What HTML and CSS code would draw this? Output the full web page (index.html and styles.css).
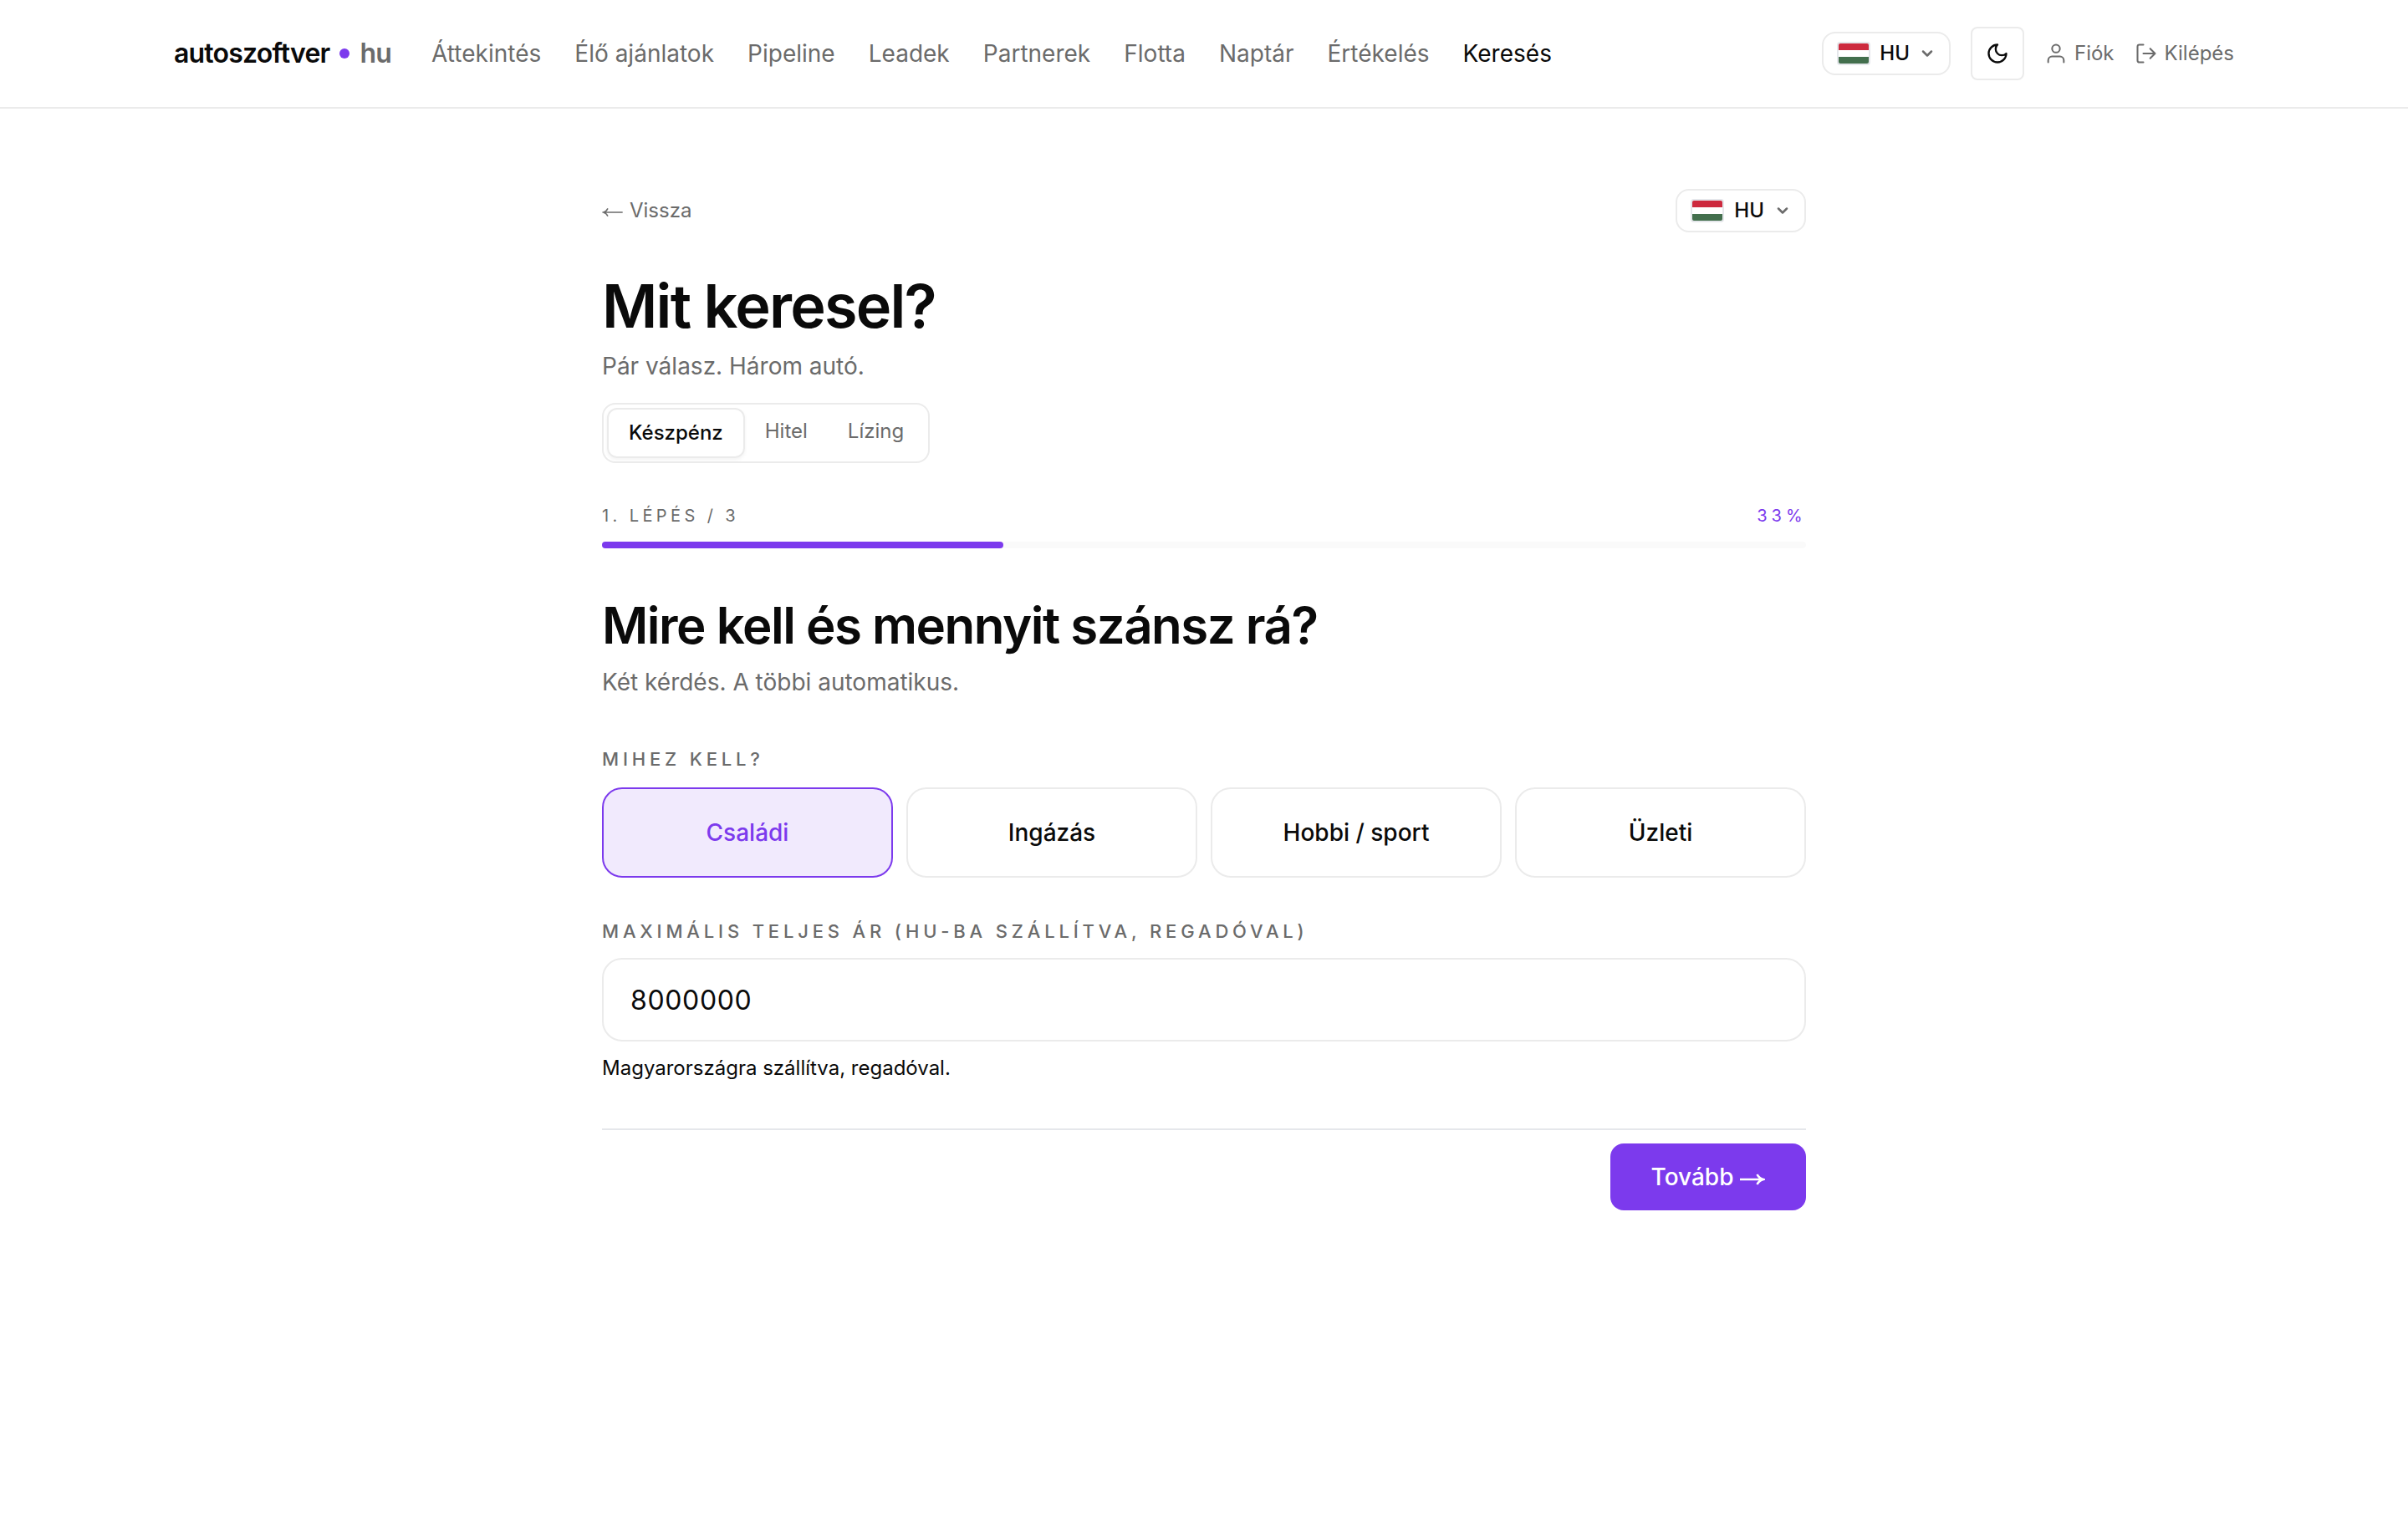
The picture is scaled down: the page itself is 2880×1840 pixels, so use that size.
FILE: index.html
```html
<!DOCTYPE html>
<html lang="hu">
<head>
<meta charset="utf-8">
<title>autoszoftver • hu</title>
<link rel="stylesheet" href="styles.css">
</head>
<body>
<header class="topbar">
  <div class="topbar-inner">
    <a class="logo"><span>autoszoftver</span><span class="logo-dot"></span><span class="logo-tld">hu</span></a>
    <nav class="nav">
      <a>Áttekintés</a>
      <a>Élő ajánlatok</a>
      <a>Pipeline</a>
      <a>Leadek</a>
      <a>Partnerek</a>
      <a>Flotta</a>
      <a>Naptár</a>
      <a>Értékelés</a>
      <a class="current">Keresés</a>
    </nav>
    <div class="tools">
      <button class="lang lang-compact"><span class="flag"></span><span>HU</span><svg class="chevron" viewBox="0 0 24 24"><path d="m6 9 6 6 6-6"/></svg></button>
      <button class="theme"><svg class="icon" viewBox="0 0 24 24"><path d="M12 3a6 6 0 0 0 9 9 9 9 0 1 1-9-9Z"/></svg></button>
      <a class="tool"><svg class="icon" viewBox="0 0 24 24"><path d="M20 21v-2a4 4 0 0 0-4-4H8a4 4 0 0 0-4 4v2"/><circle cx="12" cy="7" r="4"/></svg><span>Fiók</span></a>
      <a class="tool"><svg class="icon" viewBox="0 0 24 24"><path d="M9 21H5a2 2 0 0 1-2-2V5a2 2 0 0 1 2-2h4M16 17l5-5-5-5M21 12H9"/></svg><span>Kilépés</span></a>
    </div>
  </div>
</header>
<main class="page">
  <div class="page-top">
    <a class="back"><svg class="arrow-left" viewBox="0 0 26 14"><path d="M2 7h22.7M7 2.4C6 4.6 4.400 6.200 1.600 7C4.400 7.800 6 9.400 7 11.600"/></svg><span>Vissza</span></a>
    <button class="lang"><span class="flag"></span><span>HU</span><svg class="chevron" viewBox="0 0 24 24"><path d="m6 9 6 6 6-6"/></svg></button>
  </div>
  <h1 class="title">Mit keresel?</h1>
  <p class="subtitle">Pár válasz. Három autó.</p>
  <div class="segmented">
    <a class="segment active">Készpénz</a>
    <a class="segment">Hitel</a>
    <a class="segment">Lízing</a>
  </div>
  <div class="progress-head"><span>1. LÉPÉS / 3</span><span class="percent">33%</span></div>
  <div class="progress"><div class="progress-bar" style="width: 33.333%"></div></div>
  <h2 class="question">Mire kell és mennyit szánsz rá?</h2>
  <p class="hint">Két kérdés. A többi automatikus.</p>
  <div class="label">MIHEZ KELL?</div>
  <div class="options">
    <button class="option selected">Családi</button>
    <button class="option">Ingázás</button>
    <button class="option">Hobbi / sport</button>
    <button class="option">Üzleti</button>
  </div>
  <div class="label label-amount">MAXIMÁLIS TELJES ÁR (HU-BA SZÁLLÍTVA, REGADÓVAL)</div>
  <div class="amount">8000000</div>
  <p class="note">Magyarországra szállítva, regadóval.</p>
  <div class="actions">
    <button class="next"><span>Tovább</span><svg class="arrow-right" viewBox="0 0 30 18"><path d="M0 9h28M20.500 3C22 6 24.500 8 28 9C24.500 10 22 12 20.500 15"/></svg></button>
  </div>
</main>
</body>
</html>
```
FILE: styles.css
```css
* { box-sizing: border-box; }
body { margin: 0; background: #fff; color: #0a0a0a; font-family: Inter, "Liberation Sans", sans-serif; font-size: 32px; line-height: 1.5; }
h1, h2, p { margin: 0; }
button { font: inherit; color: inherit; background: none; margin: 0; padding: 0; }

.topbar { height: 130px; border-bottom: 2px solid #ebebeb; }
.topbar-inner { width: 2464px; height: 128px; margin: 0 auto; display: flex; align-items: center; }
.logo { display: flex; align-items: center; gap: 12px; font-size: 32px; font-weight: 600; letter-spacing: -0.025em; }
.logo-dot { width: 12px; height: 12px; border-radius: 50%; background: #7c3aed; }
.logo-tld { color: #6b6b6b; }
.nav { display: flex; gap: 40px; margin-left: 48px; font-size: 28px; letter-spacing: 0.01px; color: #6b6b6b; }
.current { color: #0a0a0a; }
.tools { display: flex; align-items: center; gap: 24px; margin-left: auto; font-size: 24px; color: #6b6b6b; }
.tool { display: flex; align-items: center; gap: 8px; }

.lang { display: flex; align-items: center; gap: 12px; height: 52px; padding: 0 16px; border: 2px solid #ebebeb; border-radius: 16px; font-size: 24px; font-weight: 500; color: #0a0a0a; }
.lang-compact .flag { margin-right: -1px; }
.lang-compact .chevron { margin-left: -1px; }
.flag { width: 40px; height: 28px; border: 2px solid #e5e7eb; border-radius: 4px; background: linear-gradient(#cd2a3e 0 33.33%, #fff 33.33% 66.67%, #436f4d 66.67%); }
.chevron { width: 20px; height: 20px; fill: none; stroke: #6b6b6b; stroke-width: 3; stroke-linecap: round; stroke-linejoin: round; }
.theme { width: 64px; height: 64px; display: flex; align-items: center; justify-content: center; border: 2px solid #ebebeb; border-radius: 8px; color: #0a0a0a; }
.icon { width: 28px; height: 28px; fill: none; stroke: currentColor; stroke-width: 2; stroke-linecap: round; stroke-linejoin: round; }
.tool .icon { stroke-width: 1.75; }

.page { width: 1440px; margin: 0 auto; padding-top: 96px; }
.page-top { display: flex; align-items: center; justify-content: space-between; }
.back { display: flex; align-items: center; gap: 7px; font-size: 24px; line-height: 36px; color: #6b6b6b; }
.arrow-left { width: 26px; height: 14px; margin-top: 3px; fill: none; stroke: currentColor; stroke-width: 1.5; }
.title { margin-top: 48px; font-size: 72px; font-weight: 600; line-height: 80px; letter-spacing: -0.025em; }
.subtitle { margin-top: 11px; font-size: 28px; line-height: 42px; color: #6b6b6b; }

.segmented { display: flex; width: fit-content; margin-top: 23px; padding: 4px; border: 2px solid #ebebeb; border-radius: 16px; font-size: 24px; line-height: 36px; color: #6b6b6b; }
.segment { padding: 10px 24px; }
.active { border: 2px solid #ebebeb; border-radius: 12px; font-weight: 500; color: #0a0a0a; box-shadow: 0 2px 4px rgba(0, 0, 0, 0.05); }
.segment:last-child { padding-right: 25px; }

.progress-head { display: flex; justify-content: space-between; margin-top: 48px; font-size: 20px; line-height: 30px; letter-spacing: 0.22em; color: #6b6b6b; }
.percent { color: #7c3aed; font-variant-numeric: tabular-nums; }
.progress { height: 8px; margin-top: 16px; border-radius: 4px; background: #fafafa; }
.progress-bar { height: 8px; border-radius: 4px; background: #7c3aed; }

.question { margin-top: 56px; font-size: 60px; font-weight: 600; line-height: 72px; letter-spacing: -0.025em; }
.hint { margin-top: 11px; font-size: 28px; line-height: 42px; color: #6b6b6b; }
.label { margin-top: 54px; font-size: 22px; line-height: 34px; font-weight: 500; letter-spacing: 0.22em; color: #6b6b6b; }
.label-amount { margin-top: 47px; }
.options { display: grid; grid-template-columns: repeat(4, 1fr); gap: 16px; margin-top: 17px; }
.option { height: 108px; border: 2px solid #ebebeb; border-radius: 24px; font-size: 28px; font-weight: 500; }
.selected { border-color: #7c3aed; background: #f1eafd; color: #7c3aed; }
.amount { display: flex; align-items: center; height: 100px; margin-top: 15px; padding: 2px 32px 0; border: 2px solid #ebebeb; border-radius: 24px; font-size: 32px; letter-spacing: 0.02em; }
.note { margin-top: 14px; font-size: 24px; line-height: 36px; }

.actions { display: flex; justify-content: flex-end; margin-top: 54px; padding-top: 16px; border-top: 2px solid #e5e7eb; }
.next { display: flex; align-items: center; justify-content: center; gap: 8px; width: 234px; height: 80px; border: 0; border-radius: 16px; background: #7c3aed; color: #fff; font-size: 28px; font-weight: 500; }
.arrow-right { width: 30px; height: 18px; margin-top: 5px; fill: none; stroke: currentColor; stroke-width: 2.6; }
```
